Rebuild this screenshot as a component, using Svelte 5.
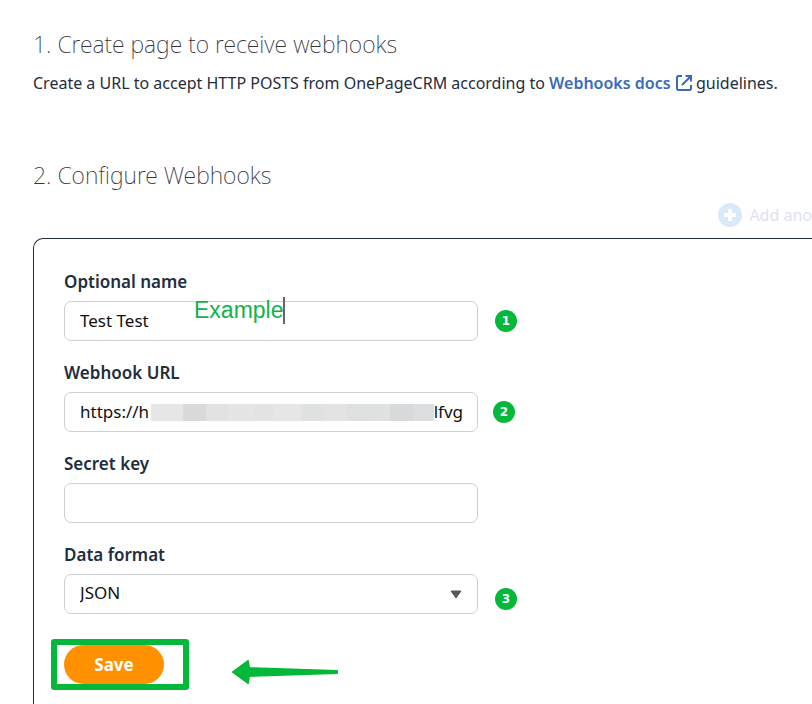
<script lang="ts">
  let name = $state('Test Test')
  let url = $state('https://h')
  let secret = $state('')
  let format = $state('JSON')

  // hidden middle part of the webhook address
  const blocks = [
    { w: 32, c: '#e6e6e7' },
    { w: 23, c: '#dadadb' },
    { w: 22, c: '#e2e2e3' },
    { w: 26, c: '#e5e5e6' },
    { w: 20, c: '#e3e3e4' },
    { w: 28, c: '#e6e6e6' },
    { w: 24, c: '#e0e1e1' },
    { w: 22, c: '#e3e3e4' },
    { w: 28, c: '#dfe0e0' },
    { w: 15, c: '#e0e1e1' },
    { w: 24, c: '#d9dadb' },
    { w: 20, c: '#dddedf' },
  ]
</script>

<main>
  <section class="intro">
    <h2>1. Create page to receive webhooks</h2>
    <p>
      Create a URL to accept HTTP POSTS from OnePageCRM according to
      <a href="#docs">Webhooks docs
        <svg class="ext" viewBox="0 0 16 16" aria-hidden="true">
          <path d="M6 1H2.5Q1 1 1 2.5v11Q1 15 2.5 15h11q1.5 0 1.5-1.5V10M9.500 1H15v5.500M15 1L6 10" />
        </svg></a>
      guidelines.
    </p>
  </section>

  <section class="config">
    <h2>2. Configure Webhooks</h2>
    <div class="toolbar">
      <button class="add" type="button" disabled>
        <svg viewBox="0 0 24 24" aria-hidden="true">
          <circle cx="12" cy="12" r="12" />
          <path d="M12 6v12M6 12h12" />
        </svg>
        Add ano
      </button>
    </div>

    <form class="panel" onsubmit={e => e.preventDefault()}>
      <div class="field">
        <label for="name">Optional name</label>
        <div class="control">
          <input id="name" type="text" bind:value={name} />
          <span class="note">Example</span>
          <span class="badge">1</span>
        </div>
      </div>

      <div class="field">
        <label for="url">Webhook URL</label>
        <div class="control">
          <input id="url" type="text" bind:value={url} />
          <div class="mask">
            <div class="blocks">
              {#each blocks as b}
                <i style="flex-grow: {b.w}; background: {b.c}"></i>
              {/each}
            </div>
            <span>lfvg</span>
          </div>
          <span class="badge near">2</span>
        </div>
      </div>

      <div class="field">
        <label for="secret">Secret key</label>
        <div class="control">
          <input id="secret" type="text" bind:value={secret} />
        </div>
      </div>

      <div class="field">
        <label for="format">Data format</label>
        <div class="control">
          <select id="format" bind:value={format}>
            <option>JSON</option>
          </select>
          <svg class="caret" viewBox="0 0 12 9" aria-hidden="true">
            <path d="M1 1h10L6 8z" />
          </svg>
          <span class="badge low">3</span>
        </div>
      </div>

      <div class="actions">
        <div class="save">
          <button type="submit">Save</button>
        </div>
        <svg class="arrow" viewBox="0 0 108 26" aria-hidden="true">
          <path d="M2 13L17 2L18 9L106 12V14L18 17L17 24Z" />
        </svg>
      </div>
    </form>
  </section>
</main>

<style>
  :global(body) {
    margin: 0;
    background: #fff;
  }
  main {
    --green: #04b83a;
    --ink: #1f2d3d;
    box-sizing: border-box;
    display: flex;
    flex-direction: column;
    gap: 64px;
    min-height: 100vh;
    padding: 28px 0 0 33px;
    color: var(--ink);
    font: 16px/24px 'Noto Sans', 'Open Sans', sans-serif;
  }
  h2 {
    margin: 0;
    color: #34343c;
    font-size: 23px;
    font-weight: 200;
    line-height: 32px;
  }
  p {
    margin: 11px 0 0;
  }
  a {
    color: #3b6bb5;
    font-weight: 600;
    text-decoration: none;
  }
  .ext {
    width: 16px;
    height: 16px;
    margin-left: 1px;
    vertical-align: -2px;
    fill: none;
    stroke: currentColor;
    stroke-width: 2;
  }
  .config {
    display: flex;
    flex: 1;
    flex-direction: column;
  }
  .toolbar {
    display: flex;
    justify-content: flex-end;
    margin: 12px 0 11px;
  }
  .add {
    display: flex;
    align-items: center;
    gap: 7px;
    padding: 0;
    border: 0;
    background: none;
    color: #dfe1f2;
    font: inherit;
  }
  .add svg {
    width: 24px;
    height: 24px;
    fill: #d8eafa;
    stroke: #fff;
    stroke-width: 4;
  }
  .add circle {
    stroke: none;
  }
  .panel {
    display: flex;
    flex: 1;
    flex-direction: column;
    gap: 20px;
    padding: 31px 30px 13px;
    border: 1px solid var(--ink);
    border-width: 1px 0 0 1px;
    border-radius: 10px 0 0 0;
  }
  .field {
    display: flex;
    flex-direction: column;
    gap: 7px;
    max-width: 414px;
  }
  label {
    font-size: 17px;
    font-weight: 600;
    line-height: 24px;
  }
  .control {
    position: relative;
  }
  input,
  select {
    box-sizing: border-box;
    display: block;
    width: 100%;
    height: 40px;
    padding: 0 15px 2px;
    border: 1px solid #cdd0d4;
    border-radius: 7px;
    outline: 0;
    background: #fff;
    color: #111;
    font: inherit;
    font-size: 17px;
    appearance: none;
  }
  .badge {
    position: absolute;
    top: 9px;
    left: calc(100% + 17px);
    width: 22px;
    height: 22px;
    border-radius: 50%;
    background: var(--green);
    color: #fff;
    font: bold 12px/22px 'DejaVu Sans', sans-serif;
    text-align: center;
  }
  .near {
    left: calc(100% + 15px);
  }
  .low {
    top: 14px;
  }
  .note {
    position: absolute;
    top: -4px;
    left: 130px;
    border-right: 2px solid #666;
    color: #12b347;
    font: 23px/27px 'Liberation Sans', Arial, sans-serif;
  }
  .mask {
    position: absolute;
    inset: 1px 15px 1px 87px;
    display: flex;
    align-items: center;
    color: #111;
    font-size: 17px;
    pointer-events: none;
  }
  .blocks {
    display: flex;
    flex: 1;
    height: 17px;
  }
  .blocks i {
    flex-basis: 0;
  }
  .caret {
    position: absolute;
    top: 16px;
    right: 16px;
    width: 12px;
    height: 9px;
    fill: #555a60;
    stroke: #555a60;
    stroke-linejoin: round;
    pointer-events: none;
  }
  .actions {
    display: flex;
    align-items: center;
    gap: 42px;
    margin: 5px 0 0 -13px;
  }
  .save {
    box-sizing: border-box;
    width: 138px;
    padding: 0 7px;
    border: 6px solid var(--green);
    border-radius: 3px;
  }
  .save button {
    display: block;
    width: 100px;
    height: 39px;
    padding: 0;
    border: 0;
    border-radius: 20px;
    background: #ff9100;
    color: #fff;
    font: inherit;
    font-size: 17px;
    font-weight: 700;
  }
  .arrow {
    width: 108px;
    height: 26px;
    margin-top: 15px;
    fill: var(--green);
    stroke: var(--green);
    stroke-width: 2;
    stroke-linejoin: round;
  }
</style>
